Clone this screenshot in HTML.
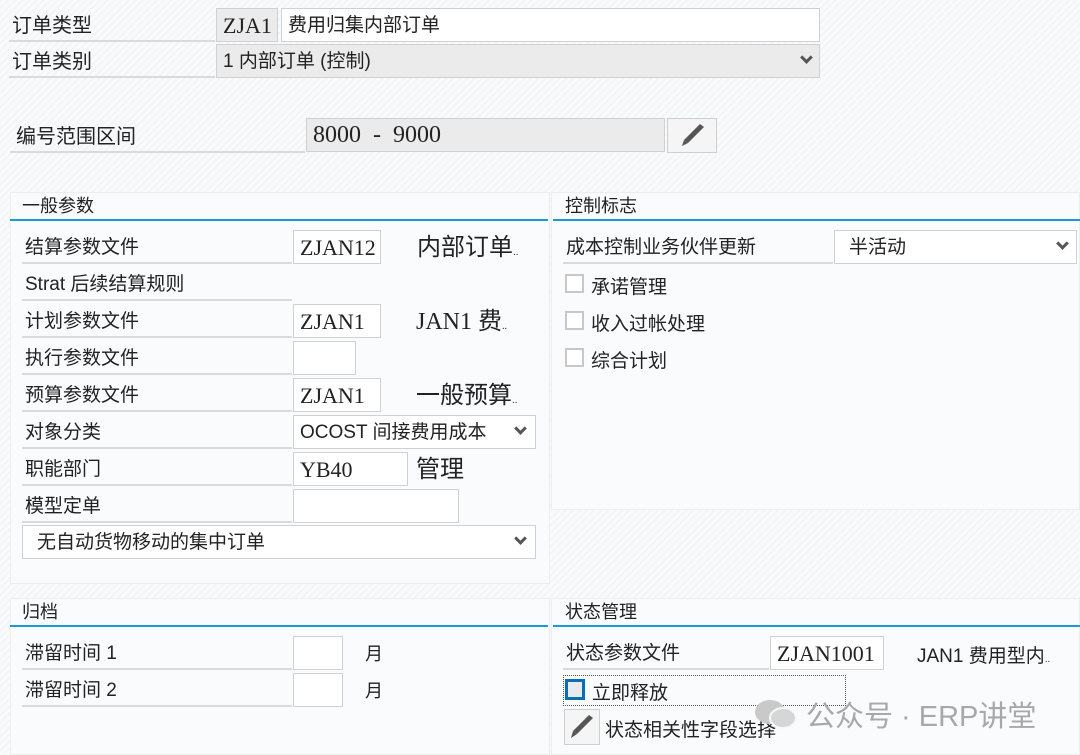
<!DOCTYPE html>
<html><head><meta charset="utf-8"><style>
*{margin:0;padding:0;box-sizing:border-box}
body{width:1080px;height:755px;overflow:hidden;position:relative;background:#f6f8f9;background-image:repeating-linear-gradient(135deg,#f3f6f7 0 2px,#f9fafb 2px 5px);font-family:"Liberation Sans","Noto Sans CJK SC",sans-serif;color:#222;font-size:19px}
.a{position:absolute;white-space:nowrap}
.lbl{position:absolute;border-bottom:2px solid #d8dadc;line-height:36px;height:34px;padding-left:3px}
.box{position:absolute;border:1px solid #cfd2d4;background:#fff;line-height:33px;padding-left:6px;font-family:"Liberation Serif","Noto Serif CJK SC",serif;font-size:22px}
.gray{background:#ebebeb}
.panel{position:absolute;background:#fafbfc;border:1px solid #eceeef}
.hdr{position:absolute;border-bottom:2px solid #1a9bd7;line-height:26px;padding-left:12px;font-size:18px}
.chev{position:absolute;width:9px;height:9px;border-right:3px solid #555;border-bottom:3px solid #555;transform:rotate(45deg)}
.cb{position:absolute;width:19px;height:19px;border:2px solid #c8c8c8;background:#fff}
.desc{position:absolute;font-size:24px;white-space:nowrap;line-height:36px}
</style></head><body>
<div class="lbl" style="left:9px;top:8px;width:206px;font-size:20px">订单类型</div>
<div class="box gray" style="left:216px;top:8px;width:62px;height:34px;font-size:22px">ZJA1</div>
<div class="box" style="left:281px;top:8px;width:539px;height:34px;font-family:'Liberation Sans','Noto Sans CJK SC',sans-serif;font-size:19px">费用归集内部订单</div>
<div class="lbl" style="left:9px;top:44px;width:206px;font-size:20px">订单类别</div>
<div class="box gray" style="left:216px;top:44px;width:604px;height:34px;font-family:'Liberation Sans','Noto Sans CJK SC',sans-serif;font-size:19px">1 内部订单 (控制)</div>
<div class="chev" style="left:802px;top:53px"></div>

<div class="lbl" style="left:10px;top:119px;width:295px;padding-left:6px;font-size:20px">编号范围区间</div>
<div class="box gray" style="left:306px;top:118px;width:359px;height:34px;font-size:24px;white-space:pre">8000  -  9000</div>
<div class="a" style="left:667px;top:118px;width:50px;height:35px;border:1px solid #cfcfcf;background:#f5f5f5"></div>
<svg class="a" style="left:678px;top:123px" width="30" height="26" viewBox="0 0 30 26"><path d="M26 4 L10 20 L6 17 L22 1 Z" fill="#555"/><path d="M6 17 L10 20 L4 23 Z" fill="#555"/></svg>

<div class="panel" style="left:10px;top:192px;width:540px;height:392px"></div>
<div class="hdr" style="left:10px;top:193px;width:538px">一般参数</div>
<div class="panel" style="left:551px;top:192px;width:529px;height:318px"></div>
<div class="hdr" style="left:553px;top:193px;width:527px">控制标志</div>

<div class="lbl" style="left:22px;top:230px;width:270px">结算参数文件</div>
<div class="box" style="left:293px;top:230px;width:88px;height:34px">ZJAN12</div>
<div class="desc" style="left:417px;top:230px">内部订单<span style="font-size:10px">..</span></div>
<div class="lbl" style="left:22px;top:267px;width:270px">Strat 后续结算规则</div>
<div class="lbl" style="left:22px;top:304px;width:270px">计划参数文件</div>
<div class="box" style="left:293px;top:304px;width:88px;height:34px">ZJAN1</div>
<div class="desc" style="left:416px;top:304px;font-family:'Liberation Serif','Noto Sans CJK SC',serif">JAN1 费<span style="font-size:10px">..</span></div>
<div class="lbl" style="left:22px;top:341px;width:270px">执行参数文件</div>
<div class="box" style="left:293px;top:341px;width:63px;height:34px"></div>
<div class="lbl" style="left:22px;top:378px;width:270px">预算参数文件</div>
<div class="box" style="left:293px;top:378px;width:88px;height:34px">ZJAN1</div>
<div class="desc" style="left:416px;top:378px">一般预算<span style="font-size:10px">..</span></div>
<div class="lbl" style="left:22px;top:415px;width:270px">对象分类</div>
<div class="box" style="left:293px;top:415px;width:243px;height:34px;font-family:'Liberation Sans','Noto Sans CJK SC',sans-serif;font-size:19px">OCOST 间接费用成本</div>
<div class="chev" style="left:516px;top:424px"></div>
<div class="lbl" style="left:22px;top:452px;width:270px">职能部门</div>
<div class="box" style="left:293px;top:452px;width:115px;height:34px">YB40</div>
<div class="desc" style="left:416px;top:452px">管理</div>
<div class="lbl" style="left:22px;top:489px;width:270px">模型定单</div>
<div class="box" style="left:293px;top:489px;width:166px;height:34px"></div>
<div class="box" style="left:22px;top:525px;width:514px;height:34px;padding-left:14px;font-family:'Liberation Sans','Noto Sans CJK SC',sans-serif;font-size:19px">无自动货物移动的集中订单</div>
<div class="chev" style="left:516px;top:534px"></div>

<div class="lbl" style="left:563px;top:230px;width:270px">成本控制业务伙伴更新</div>
<div class="box" style="left:834px;top:230px;width:243px;height:34px;padding-left:14px;font-family:'Liberation Sans','Noto Sans CJK SC',sans-serif;font-size:19px">半活动</div>
<div class="chev" style="left:1058px;top:239px"></div>
<div class="cb" style="left:565px;top:274px"></div><div class="a" style="left:591px;top:272px">承诺管理</div>
<div class="cb" style="left:565px;top:311px"></div><div class="a" style="left:591px;top:309px">收入过帐处理</div>
<div class="cb" style="left:565px;top:348px"></div><div class="a" style="left:591px;top:346px">综合计划</div>

<div class="panel" style="left:10px;top:598px;width:540px;height:157px"></div>
<div class="hdr" style="left:10px;top:599px;width:538px">归档</div>
<div class="panel" style="left:551px;top:598px;width:529px;height:157px"></div>
<div class="hdr" style="left:553px;top:599px;width:527px">状态管理</div>

<div class="lbl" style="left:22px;top:636px;width:270px">滞留时间 1</div>
<div class="box" style="left:293px;top:636px;width:50px;height:34px"></div>
<div class="a" style="left:365px;top:640px;font-size:18px">月</div>
<div class="lbl" style="left:22px;top:673px;width:270px">滞留时间 2</div>
<div class="box" style="left:293px;top:673px;width:50px;height:34px"></div>
<div class="a" style="left:365px;top:677px;font-size:18px">月</div>

<div class="lbl" style="left:563px;top:636px;width:206px">状态参数文件</div>
<div class="box" style="left:770px;top:636px;width:114px;height:34px">ZJAN1001</div>
<div class="a" style="left:917px;top:641px">JAN1 费用型内<span style="font-size:10px">..</span></div>
<div class="a" style="left:563px;top:675px;width:283px;height:31px;border:1px dotted #555"></div>
<div class="a" style="left:565px;top:679px;width:20px;height:21px;border:3px solid #0a6eb4;background:#e8ebee"></div>
<div class="a" style="left:592px;top:678px">立即释放</div>
<div class="a" style="left:564px;top:709px;width:36px;height:36px;border:1px solid #cfcfcf;background:#f5f5f5"></div>
<svg class="a" style="left:567px;top:713px" width="30" height="28" viewBox="0 0 30 28"><path d="M26 3 L10 19 L6 16 L22 0 Z" fill="#555" transform="translate(0,2)"/><path d="M6 18 L10 21 L4 25 Z" fill="#555"/></svg>
<div class="a" style="left:605px;top:715px">状态相关性字段选择</div>

<svg class="a" style="left:752px;top:697px" width="48" height="34" viewBox="0 0 48 34"><ellipse cx="18" cy="15" rx="15" ry="12" fill="#c9c9c9"/><ellipse cx="31" cy="21" rx="13" ry="10" fill="#d6d6d6" stroke="#f6f8f9" stroke-width="2"/></svg>
<div class="a" style="left:806px;top:693px;font-size:29px;color:#a8a8a8">公众号 · ERP讲堂</div>
</body></html>
